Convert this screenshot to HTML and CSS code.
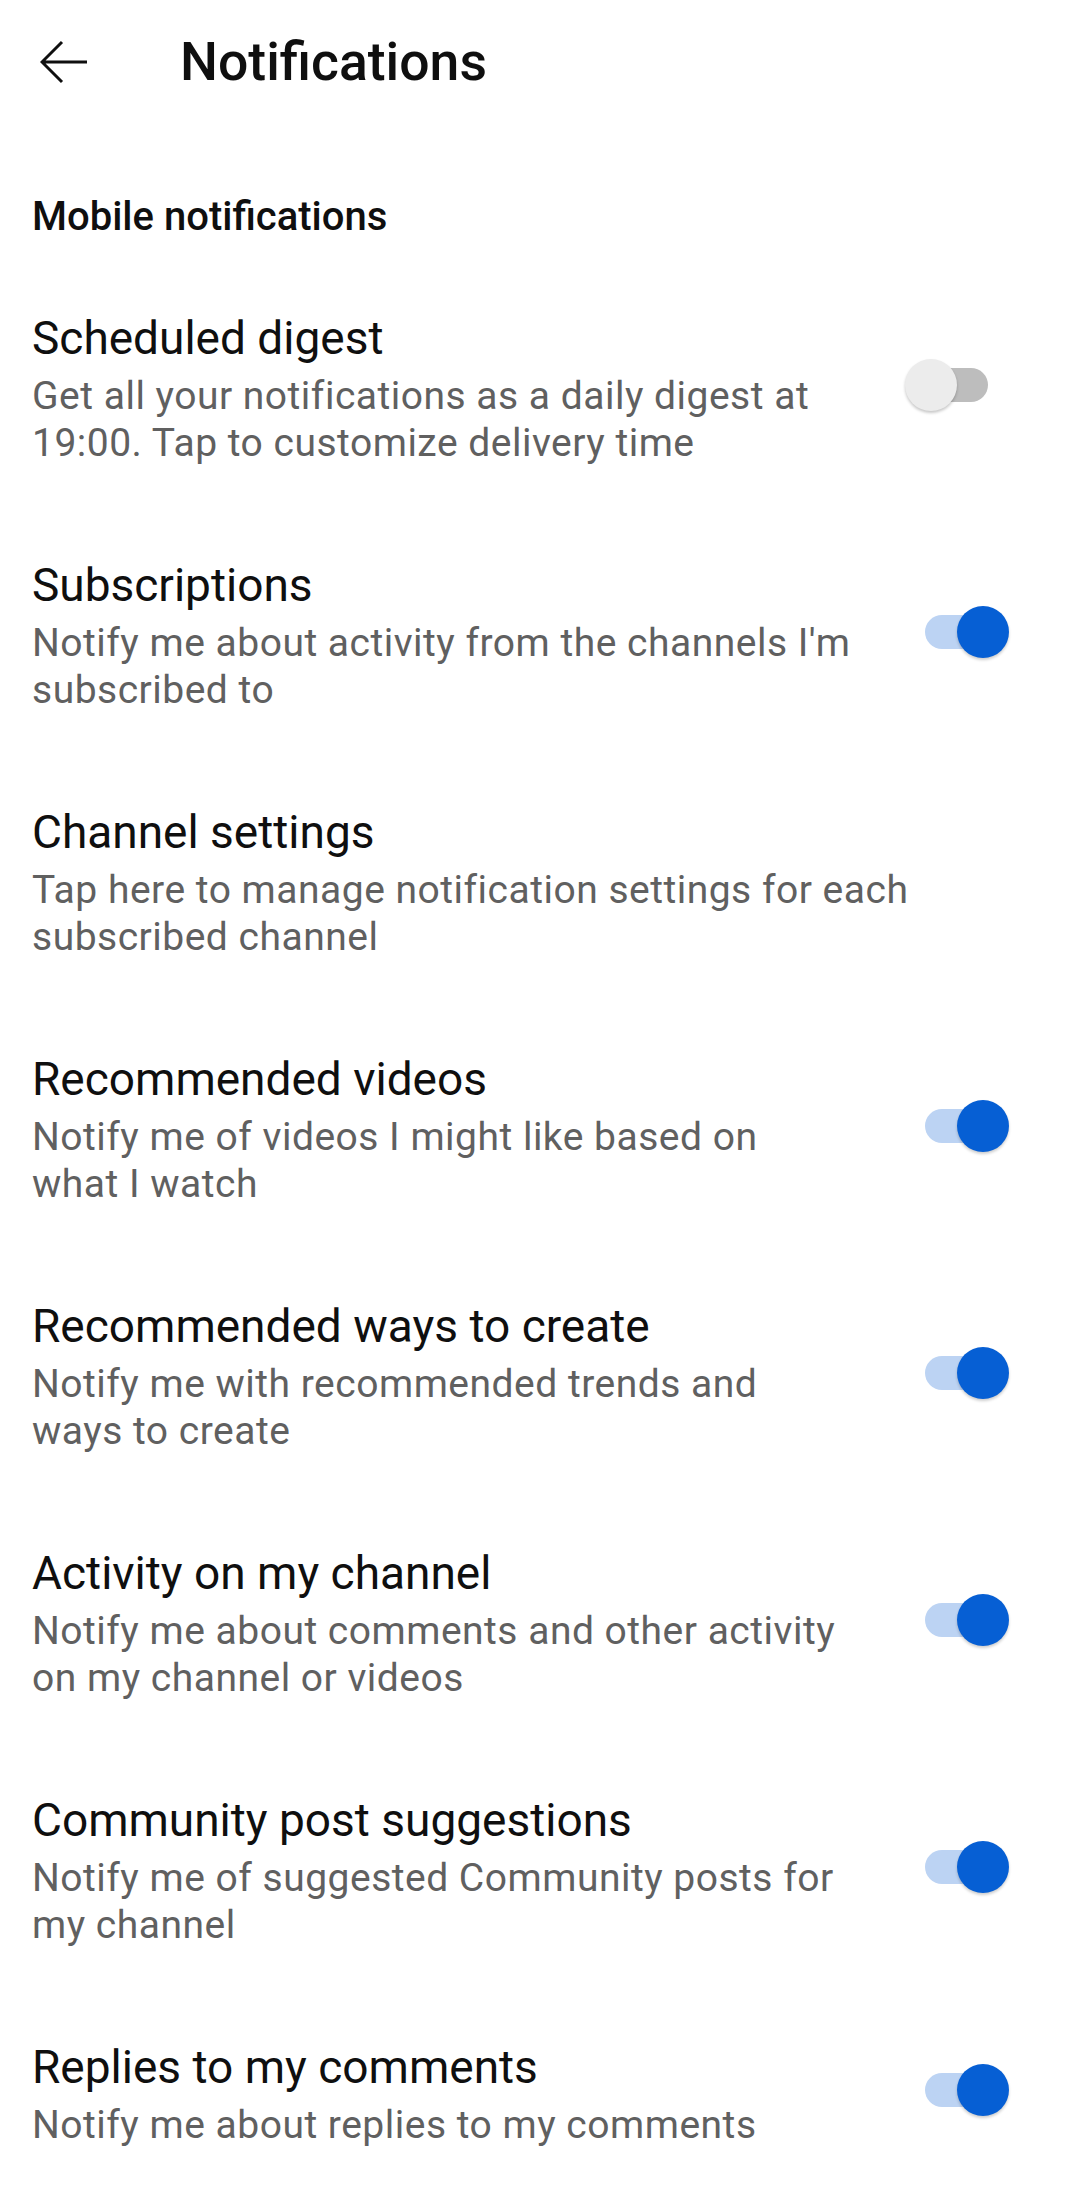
FILE: index.html
```html
<!DOCTYPE html>
<html lang="en">
<head>
<meta charset="utf-8">
<title>Notifications</title>
<link rel="stylesheet" href="styles.css">
</head>
<body>
<div class="page">
  <header class="topbar">
    <svg class="back" viewBox="0 0 48 44" width="48" height="44" aria-hidden="true">
      <path d="M2 22 H47 M22 2 L2 22 L22 42" fill="none" stroke="#0f0f0f" stroke-width="3" stroke-linecap="butt" stroke-linejoin="miter"/>
    </svg>
    <h1 class="topbar-title">Notifications</h1>
  </header>

  <h2 class="section-title">Mobile notifications</h2>

  <ul class="settings">
    <li class="row">
      <div class="text">
        <div class="title">Scheduled digest</div>
        <div class="desc">Get all your notifications as a daily digest at 19:00. Tap to customize delivery time</div>
      </div>
      <div class="switch"><span class="track"></span><span class="thumb"></span></div>
    </li>
    <li class="row">
      <div class="text">
        <div class="title">Subscriptions</div>
        <div class="desc">Notify me about activity from the channels I'm subscribed to</div>
      </div>
      <div class="switch on"><span class="track"></span><span class="thumb"></span></div>
    </li>
    <li class="row">
      <div class="text wide">
        <div class="title">Channel settings</div>
        <div class="desc">Tap here to manage notification settings for each subscribed channel</div>
      </div>
    </li>
    <li class="row">
      <div class="text">
        <div class="title">Recommended videos</div>
        <div class="desc">Notify me of videos I might like based on what I watch</div>
      </div>
      <div class="switch on"><span class="track"></span><span class="thumb"></span></div>
    </li>
    <li class="row">
      <div class="text">
        <div class="title">Recommended ways to create</div>
        <div class="desc">Notify me with recommended trends and ways to create</div>
      </div>
      <div class="switch on"><span class="track"></span><span class="thumb"></span></div>
    </li>
    <li class="row">
      <div class="text">
        <div class="title">Activity on my channel</div>
        <div class="desc">Notify me about comments and other activity on my channel or videos</div>
      </div>
      <div class="switch on"><span class="track"></span><span class="thumb"></span></div>
    </li>
    <li class="row">
      <div class="text">
        <div class="title">Community post suggestions</div>
        <div class="desc">Notify me of suggested Community posts for my channel</div>
      </div>
      <div class="switch on"><span class="track"></span><span class="thumb"></span></div>
    </li>
    <li class="row">
      <div class="text">
        <div class="title">Replies to my comments</div>
        <div class="desc">Notify me about replies to my comments</div>
      </div>
      <div class="switch on"><span class="track"></span><span class="thumb"></span></div>
    </li>
  </ul>
</div>
</body>
</html>
```

FILE: styles.css
```css
html, body {
  margin: 0;
  padding: 0;
  background: #ffffff;
}

body {
  font-family: Roboto, "Noto Sans", "Liberation Sans", sans-serif;
  color: #0f0f0f;
}

.page {
  width: 1071px;
}

.topbar {
  display: flex;
  align-items: center;
  height: 124px;
  padding-left: 40px;
}

.back {
  display: block;
  flex: none;
}

.topbar-title {
  margin: 0 0 0 92px;
  font-size: 53.5px;
  font-weight: 500;
  line-height: 64px;
  color: #0f0f0f;
}

.section-title {
  margin: 69px 0 0 0;
  padding-left: 32px;
  font-size: 40px;
  font-weight: 500;
  line-height: 47px;
  color: #0f0f0f;
}

.settings {
  list-style: none;
  margin: 25px 0 0 0;
  padding: 0;
}

.row {
  display: flex;
  align-items: center;
  padding: 45px 0 45px 32px;
}

.text {
  width: 820px;
  flex: none;
}

.text.wide {
  width: 960px;
}

.title {
  font-size: 46px;
  line-height: 56px;
  color: #0f0f0f;
}

.desc {
  margin-top: 7px;
  font-size: 39px;
  letter-spacing: 0.5px;
  line-height: 47px;
  color: #606060;
}

.switch {
  position: relative;
  flex: none;
  width: 104px;
  height: 54px;
  margin-left: 53px;
  margin-top: -8px;
}

.track {
  position: absolute;
  left: 20px;
  top: 10px;
  width: 63px;
  height: 34px;
  border-radius: 17px;
  background: #bdbdbd;
}

.thumb {
  position: absolute;
  left: 0;
  top: 1px;
  width: 52px;
  height: 52px;
  border-radius: 50%;
  background: #ececec;
  box-shadow: 0 2px 3px rgba(0, 0, 0, 0.22);
}

.switch.on .track {
  background: #bcd3f3;
}

.switch.on .thumb {
  left: 52px;
  background: #065fd4;
  box-shadow: 0 2px 3px rgba(0, 0, 0, 0.2);
}
```
